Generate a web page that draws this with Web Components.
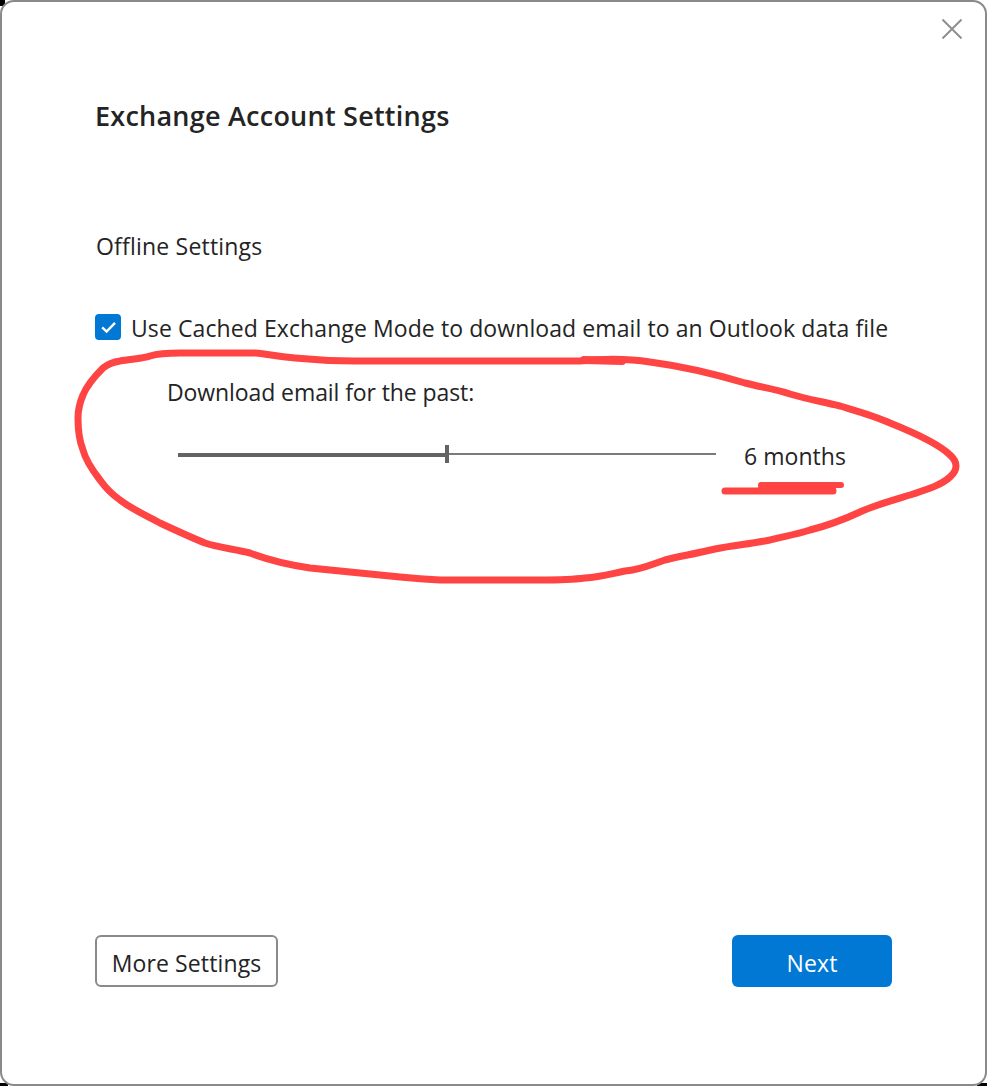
<!DOCTYPE html>
<html lang="en">
<head>
<meta charset="utf-8">
<title>Exchange Account Settings</title>
<style>
  html, body { margin: 0; height: 100%; background: #fff; }
  body { font-family: "Open Sans", "Liberation Sans", sans-serif; color: #242424; overflow: hidden; }
</style>
</head>
<body>
<account-dialog>
  <span slot="title">Exchange Account Settings</span>
  <span slot="section">Offline Settings</span>
  <check-row slot="option">Use Cached Exchange Mode to download email to an Outlook data file</check-row>
  <span slot="label">Download email for the past:</span>
  <range-line slot="range" value="6 months"></range-line>
  <dialog-button slot="left">More Settings</dialog-button>
  <dialog-button slot="right" primary>Next</dialog-button>
</account-dialog>
<pen-marks></pen-marks>

<script>
class accountDialog extends HTMLElement {
    constructor() {
        super();
        this.attachShadow({mode: 'open'});
    }

    connectedCallback() {
        this.shadowRoot.innerHTML = `
            <style>
            :host {
                display: block;
                position: relative;
                height: 100vh;
                box-sizing: border-box;
            }
            /* bits of the dark desktop showing past the rounded window corners */
            .corner { position: absolute; background: #000; }
            .tl { left: 0; top: 0; width: 5px; height: 6px; }
            .bl { left: 0; bottom: 0; width: 8px; height: 3px; }
            .br { right: 0; bottom: 0; width: 10px; height: 3px; }
            .window {
                position: relative;
                height: 100%;
                box-sizing: border-box;
                display: flex;
                flex-direction: column;
                background: #fff;
                border: 2px solid #8a8a8a;
                border-radius: 14px;
                padding: 0 93px 97px 94px;
            }
            .close {
                position: absolute;
                top: 17px;
                right: 23px;
                width: 20px;
                height: 20px;
                display: block;
            }
            .title {
                margin-top: 93px;
                height: 42px;
                line-height: 42px;
                font-size: 27px;
                font-weight: 600;
                letter-spacing: 0.24px;
                margin-left: -1px;
            }
            .section {
                margin-top: 91px;
                height: 36px;
                line-height: 36px;
                font-size: 23px;
                letter-spacing: 0.2px;
            }
            .option { margin-top: 50px; }
            .nested { margin-top: 34px; padding-left: 72px; font-size: 23px; }
            .label { height: 36px; line-height: 36px; margin-left: -1px; letter-spacing: -0.09px; }
            .range { margin-top: 29px; padding-left: 10px; letter-spacing: 0.05px; }
            .footer {
                margin-top: auto;
                display: flex;
                justify-content: space-between;
                align-items: flex-end;
            }
            </style>
            <div class="corner tl"></div>
            <div class="corner bl"></div>
            <div class="corner br"></div>
            <div class="window">
                <svg class="close" viewBox="0 0 20 20"><path d="M0.5 0.5L19.5 19.5M19.5 0.5L0.5 19.5" stroke="#8f8f8f" stroke-width="2" fill="none"/></svg>
                <div class="title"><slot name="title"></slot></div>
                <div class="section"><slot name="section"></slot></div>
                <div class="option"><slot name="option"></slot></div>
                <div class="nested">
                    <div class="label"><slot name="label"></slot></div>
                    <div class="range"><slot name="range"></slot></div>
                </div>
                <div class="footer"><slot name="left"></slot><slot name="right"></slot></div>
            </div>
        `;
    }
}

class checkRow extends HTMLElement {
    constructor() {
        super();
        this.attachShadow({mode: 'open'});
    }

    connectedCallback() {
        this.shadowRoot.innerHTML = `
            <style>
            :host {
                display: flex;
                align-items: center;
                gap: 10px;
                height: 26px;
                font-size: 23px;
                letter-spacing: 0.09px;
                white-space: nowrap;
                margin-left: -1px;
            }
            .box {
                flex: none;
                width: 26px;
                height: 26px;
                border-radius: 4px;
                background: #0078d4;
            }
            svg { display: block; }
            .text { padding-top: 2px; }
            </style>
            <div class="box">
                <svg width="26" height="26" viewBox="0 0 26 26"><path d="M7.2 13.4L11.6 17.6L20 8.8" stroke="#fff" stroke-width="2.4" fill="none"/></svg>
            </div>
            <span class="text"><slot></slot></span>
        `;
    }
}

class rangeLine extends HTMLElement {
    constructor() {
        super();
        this.attachShadow({mode: 'open'});
    }

    connectedCallback() {
        this.shadowRoot.innerHTML = `
            <style>
            :host {
                display: flex;
                align-items: center;
                height: 30px;
            }
            .track {
                position: relative;
                flex: none;
                width: 538px;
                height: 2px;
                background: #7a7a7a;
            }
            .fill {
                position: absolute;
                left: 0;
                top: 0;
                width: 268px;
                height: 4px;
                background: #636363;
            }
            .thumb {
                position: absolute;
                left: 267px;
                top: -8px;
                width: 4px;
                height: 18px;
                background: #636363;
            }
            .value { margin-left: 28px; padding-top: 4px; white-space: nowrap; }
            </style>
            <div class="track"><div class="fill"></div><div class="thumb"></div></div>
            <span class="value">${this.getAttribute('value')}</span>
        `;
    }
}

class dialogButton extends HTMLElement {
    constructor() {
        super();
        this.attachShadow({mode: 'open'});
    }

    connectedCallback() {
        this.shadowRoot.innerHTML = `
            <style>
            :host {
                display: flex;
                align-items: center;
                justify-content: center;
                box-sizing: border-box;
                width: 183px;
                height: 52px;
                margin-left: -1px;
                padding-top: 3px;
                border: 2px solid #8a8a8a;
                border-radius: 6px;
                background: #fff;
                font-size: 23px;
                letter-spacing: 0.12px;
            }
            :host([primary]) {
                width: 160px;
                margin-left: 0;
                border: 0;
                background: #0078d4;
                color: #fff;
            }
            </style>
            <slot></slot>
        `;
    }
}

class penMarks extends HTMLElement {
    constructor() {
        super();
        this.attachShadow({mode: 'open'});
    }

    connectedCallback() {
        // the red freehand ring and underline drawn on top of the dialog
        this.shadowRoot.innerHTML = `
            <style>
            :host {
                position: absolute;
                left: 0;
                top: 0;
                width: 987px;
                height: 1086px;
                pointer-events: none;
            }
            svg { display: block; }
            path { fill: none; stroke: #ff4444; stroke-linecap: round; stroke-linejoin: round; }
            </style>
            <svg width="987" height="1086" viewBox="0 0 987 1086">
                <path stroke-width="7" d="M120 361C130 359 142 359 150 356C160 353 170 353 180 353L255 353C268 354 280 357 295 358C315 360 335 361 355 361L580 361C600 359 625 358 650 362C680 366 715 374 745 383C760 387 775 389 790 394C810 400 825 402 840 406C860 412 875 416 890 423C915 433 940 445 950 455C958 462 958 470 950 477C940 486 925 490 910 495C890 501 875 505 860 512C845 519 830 525 810 530C795 535 780 537 770 540C750 544 735 545 715 549C690 555 680 556 665 560C650 565 640 570 625 571C610 574 600 577 585 578C570 580 555 580 540 580L440 580C420 579 410 578 400 577C370 574 340 571 310 568C290 565 268 560 250 553C235 549 220 548 205 543C190 537 175 530 160 523C145 515 130 508 120 500C110 493 105 487 100 480C90 467 85 458 83 450C79 440 78 430 78 418C78 408 80 402 83 395C87 385 94 377 103 368C108 364 113 362 120 361Z"/>
                <path stroke-width="8" d="M584 360L622 361"/>
                <path stroke-width="7" d="M725 491L833 491"/>
                <path stroke-width="6" d="M761 485L841 485"/>
                <path stroke-width="6" d="M761 488L833 488"/>
            </svg>
        `;
    }
}

customElements.define("account-dialog", accountDialog);
customElements.define("check-row", checkRow);
customElements.define("range-line", rangeLine);
customElements.define("dialog-button", dialogButton);
customElements.define("pen-marks", penMarks);
</script>
</body>
</html>
